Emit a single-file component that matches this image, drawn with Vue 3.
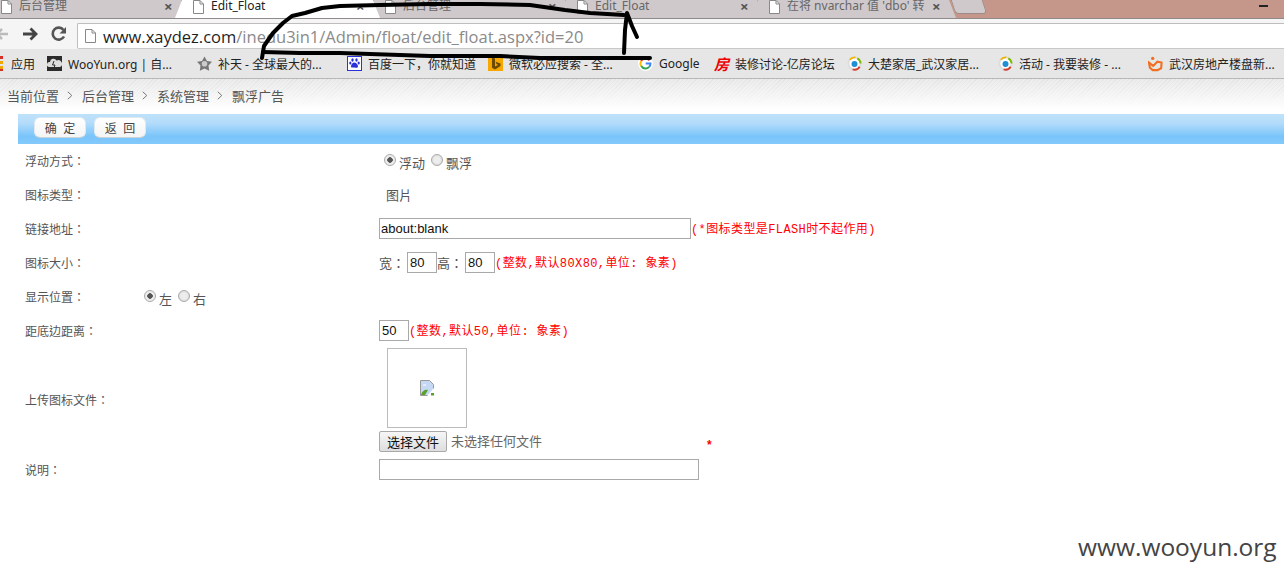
<script setup>
const tabs = [
  { title: '后台管理', on: false },
  { title: 'Edit_Float', on: true },
  { title: '后台管理', on: false },
  { title: 'Edit_Float', on: false },
  { title: "在将 nvarchar 值 'dbo' 转", on: false }
]
const marks = [
  { id: 'woo', w: 150, t: 'WooYun.org | 自...' },
  { id: 'star', w: 150, t: '补天 - 全球最大的...' },
  { id: 'paw', w: 141, t: '百度一下，你就知道' },
  { id: 'bing', w: 150, t: '微软必应搜索 - 全...' },
  { id: 'g', w: 76, t: 'Google' },
  { id: 'fang', w: 133, t: '装修讨论-亿房论坛' },
  { id: 'ring', w: 151, t: '大楚家居_武汉家居...' },
  { id: 'ring', w: 150, t: '活动 - 我要装修 - ...' },
  { id: 'house', w: 136, t: '武汉房地产楼盘新...' }
]
const crumbs = ['当前位置', '后台管理', '系统管理', '飘浮广告']
</script>

<template>
  <div class="root">
    <div class="strip">
      <div v-for="(tab, i) in tabs" :key="i" class="tab" :class="{ on: tab.on }">
        <svg class="doc" width="11" height="14" viewBox="0 0 11 14"><path d="M.5.5h6.500l3.500 3.500v9.500h-10z" fill="#fff" stroke="#888"/><path d="M7 .5v3.500h3.500" fill="none" stroke="#888"/></svg>
        <span class="tab-title">{{ tab.title }}</span>
        <span class="tab-x">×</span>
      </div>
      <div class="newtab"></div>
      <div class="min"></div>
    </div>

    <div class="toolbar">
      <svg class="nav back" width="14" height="14" viewBox="0 0 14 14"><path d="M13 7H2M7 2 2 7l5 5" fill="none" stroke="#bbb" stroke-width="2.500"/></svg>
      <svg class="nav fwd" width="16" height="14" viewBox="0 0 16 14"><path d="M1 7h13M8.500 1.500 14 7l-5.500 5.500" fill="none" stroke="#444" stroke-width="2.800"/></svg>
      <svg class="nav rel" width="16" height="16" viewBox="0 0 16 16"><path d="M13 10.500A6 6 0 1 1 12.500 4" fill="none" stroke="#555" stroke-width="2.600"/><path d="M15 1v6.500H8.500z" fill="#555"/></svg>
      <div class="omni">
        <svg width="11" height="14" viewBox="0 0 11 14"><path d="M.5.5h6.500l3.500 3.500v9.500h-10z" fill="#fff" stroke="#888"/><path d="M7 .5v3.500h3.500" fill="none" stroke="#888"/></svg>
        <span class="url"><b>www.xaydez.com</b>/inedu3in1/Admin/float/edit_float.aspx?id=20</span>
      </div>
    </div>

    <div class="marks">
      <div class="apps">
        <span class="dots"></span>
        <span>应用</span>
      </div>
      <div v-for="(m, i) in marks" :key="i" class="mark" :style="{ width: m.w + 'px' }">
        <svg v-if="m.id === 'woo'" width="15" height="15" viewBox="0 0 15 15"><rect width="15" height="15" fill="#2b2b2b"/><path d="M2 11a2.500 2.500 0 0 1 1-5 3.500 3.500 0 0 1 6.500-1.500A3.200 3.200 0 0 1 13 11z" fill="#ddd"/><path d="M7 5 5.500 9H8l-1 3" stroke="#2b2b2b" fill="none"/></svg>
        <svg v-else-if="m.id === 'star'" width="15" height="15" viewBox="0 0 15 15"><path d="M7.500.5 10 5l5 .8-3.500 3.700.7 5.200-4.700-2.200-4.700 2.200.7-5.200L0 5.800 5 5z" fill="#777"/><circle cx="7.500" cy="7.800" r="2.800" fill="#ccc"/></svg>
        <svg v-else-if="m.id === 'paw'" width="15" height="15" viewBox="0 0 15 15"><rect x=".5" y=".5" width="14" height="14" fill="#fff" stroke="#2a32d8"/><g fill="#2a32d8"><ellipse cx="5.500" cy="4" rx="1.200" ry="1.700"/><ellipse cx="9.500" cy="4" rx="1.200" ry="1.700"/><ellipse cx="3.300" cy="7" rx="1.100" ry="1.500"/><ellipse cx="11.700" cy="7" rx="1.100" ry="1.500"/><path d="M7.500 6.500c2 0 3.500 2.500 3.500 4s-2 1.500-3.500 1-3.500 1-3.500-1 1.500-4 3.500-4z"/></g></svg>
        <svg v-else-if="m.id === 'bing'" width="15" height="15" viewBox="0 0 15 15"><rect width="15" height="15" fill="#f6a800"/><path d="M4 1.500 7 2.600v8l3-1.700-1.500-.8-1-2.400 5 1.700v2.700L7 13.500 4 11.800z" fill="#6b4a00"/></svg>
        <svg v-else-if="m.id === 'g'" width="15" height="15" viewBox="0 0 15 15"><circle cx="7.500" cy="7.500" r="7.500" fill="#fff"/><path d="M11.500 4.400A5 5 0 0 0 3.200 5" fill="none" stroke="#ea4335" stroke-width="2"/><path d="M3.200 5a5 5 0 0 0 0 5" fill="none" stroke="#fbbc05" stroke-width="2"/><path d="M3.200 10a5 5 0 0 0 8 .8" fill="none" stroke="#34a853" stroke-width="2"/><path d="M11.200 10.800A5 5 0 0 0 12.500 7.500H7.700" fill="none" stroke="#4285f4" stroke-width="2"/></svg>
        <span v-else-if="m.id === 'fang'" class="fang">房</span>
        <svg v-else-if="m.id === 'ring'" width="15" height="15" viewBox="0 0 16 16"><circle cx="8" cy="8" r="6.500" fill="#fff" stroke="#ddd" stroke-width="2"/><path d="M3 4a6.500 6.500 0 0 1 6-2.500" fill="none" stroke="#f0b400" stroke-width="2"/><path d="M11 2.500A6.500 6.500 0 0 1 14.500 8" fill="none" stroke="#7ab800" stroke-width="2"/><path d="M13.500 11.500A6.500 6.500 0 0 1 6 14.300" fill="none" stroke="#d23c2c" stroke-width="2"/><circle cx="8" cy="8.500" r="3.200" fill="#1f8fd6"/></svg>
        <svg v-else width="15" height="16" viewBox="0 0 16 16"><circle cx="5" cy="2" r="1.800" fill="#f26f21"/><path d="M1 6.500 5.500 10l4.500-4.500 4.500 1-.5 6-4 2H5L2 12z" fill="none" stroke="#f26f21" stroke-width="2.200"/></svg>
        <span class="mark-text">{{ m.t }}</span>
      </div>
    </div>

    <div class="crumbs">
      <template v-for="(c, i) in crumbs" :key="i">
        <svg v-if="i" class="chev" width="6" height="9" viewBox="0 0 6 9"><path d="M.8.8 4.800 4.500.8 8.200" fill="none" stroke="#777"/></svg>
        <span>{{ c }}</span>
      </template>
    </div>

    <div class="bar">
      <button class="act">确&nbsp;&nbsp;定</button>
      <button class="act">返&nbsp;&nbsp;回</button>
    </div>

    <form class="form">
      <div class="row">
        <label class="lab">浮动方式：</label>
        <div class="val radios">
          <input type="radio" name="a" checked><span>浮动</span><input type="radio" name="a"><span>飘浮</span>
        </div>
      </div>
      <div class="row">
        <label class="lab">图标类型：</label>
        <div class="val plain">图片</div>
      </div>
      <div class="row">
        <label class="lab">链接地址：</label>
        <div class="val"><input class="inp w312" value="about:blank"><span class="red">(*图标类型是FLASH时不起作用)</span></div>
      </div>
      <div class="row">
        <label class="lab">图标大小：</label>
        <div class="val">
          <span class="unit">宽：</span><input class="inp w30" value="80"><span class="unit">高：</span><input class="inp w30" value="80"><span class="red">(整数,默认80X80,单位: 象素)</span>
        </div>
      </div>
      <div class="row">
        <label class="lab short">显示位置：</label>
        <div class="val radios">
          <input type="radio" name="b" checked><span>左</span><input type="radio" name="b"><span>右</span>
        </div>
      </div>
      <div class="row">
        <label class="lab">距底边距离：</label>
        <div class="val"><input class="inp w30" value="50"><span class="red">(整数,默认50,单位: 象素)</span></div>
      </div>
      <div class="row upload">
        <label class="lab">上传图标文件：</label>
        <div class="val column">
          <div class="pic">
            <svg width="16" height="16" viewBox="0 0 16 16"><path d="M1.500 .5h9l4 4v6l-4 5h-9z" fill="#c5d9f5" stroke="#999"/><path d="M2 15c1-4 4-6 7-5l-3 5z" fill="#5aa02c"/><path d="M15 8 8 16h7z" fill="#fff"/><path d="M12 13h3v2.500h-3z" fill="#5aa02c"/><path d="M4 4.500h3v1H4z" fill="#fff"/></svg>
          </div>
          <div class="filerow">
            <button type="button" class="filebtn">选择文件</button>
            <span class="nofile">未选择任何文件</span>
            <span class="star">*</span>
          </div>
        </div>
      </div>
      <div class="row">
        <label class="lab">说明：</label>
        <div class="val"><input class="inp w320"></div>
      </div>
    </form>

    <svg class="scribble" width="1284" height="100" viewBox="0 0 1284 100">
      <g fill="none" stroke="#000" stroke-width="4" stroke-linecap="round" stroke-linejoin="round">
        <path d="M262 58 264 46 273 33 283 23 292 16 305 13 322 8 340 6 380 5 430 4 480 4 530 5 565 10 590 13 624 15"/>
        <path d="M263 52 300 53 340 53 400 55 430 56 500 56 540 58 650 58"/>
        <path d="M624 53 625 30 627 13 632 26 637 37"/>
      </g>
    </svg>

    <div class="mark-wm">www.wooyun.org</div>
  </div>
</template>

<style>
html, body { margin: 0; padding: 0; background: #fff; overflow: hidden; }
</style>

<style scoped>
.root {
  position: relative;
  width: 1284px;
  height: 577px;
  overflow: hidden;
  font-family: "Liberation Sans", "Noto Sans CJK TC", sans-serif;
  font-size: 12px;
  color: #555;
}
.strip {
  position: relative;
  display: flex;
  height: 18px;
  background: #c4978a;
  border-bottom: 1px solid #8e8a8a;
}
.tab {
  flex: none;
  position: relative;
  display: flex;
  align-items: flex-start;
  width: 205px;
  height: 18px;
  margin-right: -13px;
  padding-left: 18px;
  box-sizing: border-box;
  background: #d0c9cc;
  clip-path: polygon(7px 0, calc(100% - 7px) 0, 100% 100%, 0 100%);
  color: #666;
  font-family: "Noto Sans", "Noto Sans CJK SC", sans-serif;
}
.tab:first-child { margin-left: -17px; }
.tab.on { background: #fff; color: #222; z-index: 2; }
.doc { flex: none; }
.tab-title {
  margin-left: 7px;
  line-height: 12px;
  white-space: nowrap;
  width: 142px;
  overflow: hidden;
}
.tab-x {
  position: absolute;
  left: 181px;
  top: 0;
  font-size: 15px;
  line-height: 13px;
  font-weight: bold;
  color: #555;
}
.newtab {
  flex: none;
  width: 30px;
  height: 13px;
  margin-left: 10px;
  background: #d0c9cc;
  border: 1px solid #9b8a85;
  border-top: 0;
  border-radius: 0 0 4px 4px;
  transform: skewX(18deg);
}
.min {
  position: absolute;
  left: 1259px;
  top: 5px;
  width: 9px;
  height: 2px;
  background: #222;
}
.toolbar {
  display: flex;
  align-items: center;
  height: 30px;
  background: #f5f5f5;
}
.nav { flex: none; }
.back { margin-left: -5px; }
.fwd { margin-left: 13px; }
.rel { margin-left: 13px; }
.omni {
  flex: 1;
  display: flex;
  align-items: center;
  height: 26px;
  margin: 4px 0 0 10px;
  padding-left: 7px;
  background: #fff;
  border: 1px solid #bdbdbd;
  border-right: 0;
  border-bottom-color: #c8c8c8;
  border-radius: 2px 0 0 2px;
  box-sizing: border-box;
}
.url {
  margin-left: 7px;
  font-family: "Open Sans", sans-serif;
  font-size: 16.500px;
  color: #8a8a8a;
  white-space: nowrap;
}
.url b { font-weight: 400; color: #1f1f1f; }
.marks {
  display: flex;
  align-items: center;
  height: 29px;
  background: #e6e6e6;
  border-bottom: 1px solid #b8b8b8;
  color: #222;
  font-family: "Noto Sans", "Noto Sans CJK SC", sans-serif;
  white-space: nowrap;
}
.apps {
  flex: none;
  display: flex;
  align-items: center;
  width: 47px;
}
.dots {
  width: 3px;
  height: 15px;
  margin-right: 8px;
  background: repeating-linear-gradient(#d93025 0 3px, transparent 3px 5px, #f0a800 5px 8px, transparent 8px 10px, #f0a800 10px 13px);
}
.mark {
  flex: none;
  display: flex;
  align-items: center;
  gap: 6px;
  overflow: hidden;
}
.mark svg { flex: none; }
.fang {
  width: 15px;
  color: #e00;
  font-size: 15px;
  font-weight: bold;
  font-style: italic;
  line-height: 16px;
  font-family: "Noto Sans CJK SC", sans-serif;
}
.crumbs {
  display: flex;
  align-items: center;
  height: 35px;
  padding: 0 0 2px 7px;
  box-sizing: border-box;
  background:
    linear-gradient(rgba(255,255,255,0), #fff 88%),
    repeating-linear-gradient(135deg, rgba(0,0,0,.035) 0 1px, transparent 1px 3px),
    #ececec;
  font-family: "Liberation Sans", "Noto Sans CJK SC", sans-serif;
  font-size: 13px;
  color: #555;
}
.chev { margin: 0 9px 0 8px; }
.bar {
  display: flex;
  align-items: flex-start;
  gap: 8px;
  height: 30px;
  margin-left: 18px;
  padding: 3px 0 0 16px;
  box-sizing: border-box;
  background: linear-gradient(#bfe2fa, #b4dcfa 30%, #79c4fa 75%, #84c9fb);
}
.act {
  width: 52px;
  height: 21px;
  padding: 0;
  border: 1px solid #dfe9f0;
  border-bottom-color: #c9d3da;
  border-radius: 6px;
  background: linear-gradient(#fff, #f4f4f4);
  font: 12px "Liberation Sans", "Noto Sans CJK SC", sans-serif;
  color: #444;
}
.form { display: block; margin-top: -1px; }
.row {
  display: flex;
  align-items: center;
  height: 34px;
}
.upload { height: 105px; }
.lab {
  flex: none;
  width: 354px;
  margin-left: 25px;
  color: #555;
}
.lab.short { width: 114px; }
.val {
  display: flex;
  align-items: center;
  white-space: nowrap;
}
.radios {
  padding: 4px 0 0 5px;
  font-size: 13px;
}
.radios input {
  appearance: none;
  width: 12px;
  height: 12px;
  margin: -4px 3px 0 0;
  border: 1px solid #aaa;
  border-radius: 50%;
  background: radial-gradient(circle, #ededed 40%, #cfcfcf);
  box-sizing: border-box;
}
.radios input:checked {
  background: radial-gradient(circle, #555 0 2.500px, #eee 3px);
}
.radios span { margin-right: 6px; }
.plain { padding-left: 7px; font-size: 13px; }
.unit { font-size: 13px; margin-right: 2px; }
.inp {
  height: 21px;
  padding: 0 0 0 1px;
  border: 1px solid #a9a9a9;
  box-sizing: border-box;
  background: #fff;
  font: 13px "Liberation Sans", sans-serif;
  color: #111;
  outline: 0;
}
.w312 { width: 312px; }
.w320 { width: 320px; }
.w30 { width: 30px; padding-left: 2px; }
.red {
  color: #f00;
  font-family: "Liberation Mono", "Noto Sans CJK SC", monospace;
  font-size: 12px;
  letter-spacing: 0.4px;
}
.column { flex-direction: column; align-items: flex-start; }
.pic {
  display: flex;
  align-items: center;
  justify-content: center;
  width: 80px;
  height: 80px;
  margin-left: 8px;
  border: 1px solid #bbb;
  box-sizing: border-box;
}
.filerow {
  position: relative;
  display: flex;
  align-items: center;
  margin-top: 3px;
}
.filebtn {
  width: 68px;
  height: 21px;
  padding: 0;
  border: 1px solid #a8a8a8;
  border-radius: 2px;
  background: linear-gradient(#f6f6f6, #dedede);
  font: 13px "Noto Sans CJK SC", sans-serif;
  color: #111;
}
.nofile {
  margin: 0 0 2px 4px;
  font-size: 13px;
  color: #666;
}
.star {
  position: absolute;
  left: 328px;
  top: 7px;
  color: #f00;
  font-size: 12px;
  font-weight: bold;
  line-height: 14px;
}
.scribble {
  position: absolute;
  left: 0;
  top: 0;
  pointer-events: none;
  z-index: 5;
}
.mark-wm {
  position: absolute;
  left: 1078px;
  top: 530px;
  font-family: "Open Sans", sans-serif;
  font-size: 24.500px;
  line-height: 34px;
  color: #444;
  white-space: nowrap;
}
</style>
